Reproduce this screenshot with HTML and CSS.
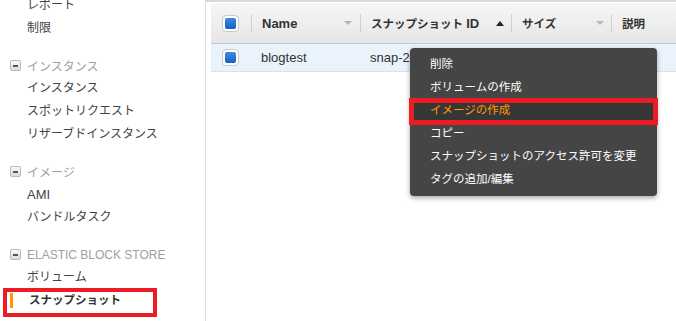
FILE: index.html
```html
<!DOCTYPE html>
<html lang="ja">
<head>
    <meta charset="UTF-8">
    <meta name="viewport" content="width=device-width, initial-scale=1.0">
    <title>EC2 スナップショット</title>
    <link rel="stylesheet" href="styles.css">
</head>
<body>
    <div class="page">
        <nav class="sidebar">
            <ul class="nav-list first">
                <li>レポート</li>
                <li>制限</li>
            </ul>
            <div class="nav-group">
                <div class="group-title"><span class="toggle"></span>インスタンス</div>
                <ul class="nav-list">
                    <li>インスタンス</li>
                    <li>スポットリクエスト</li>
                    <li>リザーブドインスタンス</li>
                </ul>
            </div>
            <div class="nav-group">
                <div class="group-title"><span class="toggle"></span>イメージ</div>
                <ul class="nav-list">
                    <li class="latin">AMI</li>
                    <li>バンドルタスク</li>
                </ul>
            </div>
            <div class="nav-group">
                <div class="group-title latin-title"><span class="toggle"></span>ELASTIC BLOCK STORE</div>
                <ul class="nav-list">
                    <li>ボリューム</li>
                    <li class="selected">スナップショット</li>
                </ul>
            </div>
        </nav>

        <main class="content">
            <div class="grid">
                <div class="grid-head">
                    <div class="cell check-cell"><span class="check"><span></span></span></div>
                    <div class="cell col-name"><span class="latin">Name</span><span class="arrow down"></span></div>
                    <div class="cell col-id"><span>スナップショット <span class="latin">ID</span></span><span class="arrow up"></span></div>
                    <div class="cell col-size"><span>サイズ</span><span class="arrow down"></span></div>
                    <div class="cell col-desc"><span>説明</span></div>
                </div>
                <div class="grid-row">
                    <div class="cell check-cell"><span class="check"><span></span></span></div>
                    <div class="cell col-name latin">blogtest</div>
                    <div class="cell col-id latin">snap-2a1b3c4d</div>
                    <div class="cell col-size latin">8 GiB</div>
                    <div class="cell col-desc"></div>
                </div>
            </div>

            <ul class="context-menu">
                <li>削除</li>
                <li>ボリュームの作成</li>
                <li class="active">イメージの作成</li>
                <li>コピー</li>
                <li>スナップショットのアクセス許可を変更</li>
                <li>タグの追加/編集</li>
            </ul>
        </main>
    </div>
</body>
</html>
```

FILE: styles.css
```css
body {
    margin: 0;
    font-family: "Liberation Sans", "Noto Sans CJK JP", sans-serif;
    font-size: 12px;
    color: #444;
    background: #fff;
}
.page {
    display: flex;
    height: 321px;
    overflow: hidden;
}
.latin {
    font-size: 13px;
}

/* sidebar */
.sidebar {
    width: 205px;
    flex: none;
    border-right: 1px solid #dcdcdc;
    overflow: hidden;
}
.nav-list {
    list-style: none;
    margin: 0;
    padding: 0;
}
.nav-list.first {
    margin-top: -6px;
}
.nav-list li {
    position: relative;
    height: 23px;
    line-height: 23px;
    padding-left: 27px;
    white-space: nowrap;
}
.nav-group {
    margin-top: 14px;
}
.group-title {
    display: flex;
    align-items: center;
    height: 23px;
    padding-left: 10px;
    color: #a0a0a0;
}
.latin-title {
    font-size: 12px;
}
.toggle {
    position: relative;
    width: 11px;
    height: 11px;
    margin-right: 6px;
    border: 1px solid #b8b8b8;
    border-radius: 2px;
    background: linear-gradient(#fafafa, #dcdcdc);
    box-sizing: border-box;
}
.toggle::after {
    content: "";
    position: absolute;
    left: 2px;
    right: 2px;
    top: 4px;
    height: 2px;
    background: #555;
}
.nav-list li.selected {
    padding-left: 29px;
    font-size: 11.5px;
    font-weight: bold;
    color: #333;
}
.nav-list li.selected::before {
    content: "";
    position: absolute;
    left: 10px;
    top: 4px;
    width: 3px;
    height: 15px;
    background: #f90;
}
.nav-list li.selected::after {
    content: "";
    position: absolute;
    left: 3px;
    top: -1px;
    width: 154px;
    height: 29px;
    border: 4px solid #ed1c24;
    box-sizing: border-box;
}

/* table */
.content {
    position: relative;
    flex: 1;
    padding-left: 5px;
    border-top: 2px solid #d8d8d8;
}
.grid {
    border-top: 1px solid #fff;
}
.grid-head {
    display: flex;
    align-items: center;
    height: 40px;
    background: linear-gradient(#f6f6f6, #e6e6e6);
    border-bottom: 1px solid #c9c9c9;
    font-size: 11.5px;
    font-weight: bold;
    color: #333;
}
.grid-row {
    display: flex;
    align-items: center;
    height: 27px;
    background: #eaf2fc;
    border-bottom: 1px solid #dbe1e8;
    color: #333;
}
.cell {
    display: flex;
    align-items: center;
    justify-content: space-between;
    box-sizing: border-box;
    padding: 0 7px 0 10px;
    white-space: nowrap;
}
.grid-head .cell {
    height: 18px;
    border-left: 1px solid #cfcfcf;
}
.grid-head .check-cell {
    border-left: none;
}
.check-cell {
    width: 40px;
    padding-left: 11px;
}
.col-name {
    width: 109px;
    padding-right: 8px;
}
.col-id {
    width: 151px;
}
.col-size {
    width: 100px;
}
.col-desc {
    flex: 1;
}
.check {
    display: block;
    width: 17px;
    height: 17px;
    padding: 2px;
    border: 1px solid #c9c9c9;
    border-radius: 4px;
    background: #fff;
    box-sizing: border-box;
}
.check span {
    display: block;
    height: 100%;
    border-radius: 2px;
    background: linear-gradient(#3b8be0, #1462c4);
}
.arrow {
    width: 0;
    height: 0;
    border-left: 4px solid transparent;
    border-right: 4px solid transparent;
}
.arrow.down {
    border-top: 4px solid #b5b5b5;
}
.arrow.up {
    border-bottom: 5px solid #222;
}

/* context menu */
.context-menu {
    position: absolute;
    left: 204px;
    top: 46px;
    width: 247px;
    margin: 0;
    padding: 5px 0 5px;
    list-style: none;
    background: #454545;
    border-radius: 4px;
    box-shadow: 0 2px 5px rgba(0, 0, 0, 0.35);
    color: #fff;
    font-size: 11.5px;
}
.context-menu li {
    position: relative;
    height: 23px;
    line-height: 23px;
    padding-left: 20px;
    white-space: nowrap;
}
.context-menu li.active {
    background: #363636;
    color: #f90;
}
.context-menu li.active::after {
    content: "";
    position: absolute;
    left: -1px;
    right: -1px;
    top: -1px;
    bottom: -3px;
    border: 5px solid #ed1c24;
}
```
